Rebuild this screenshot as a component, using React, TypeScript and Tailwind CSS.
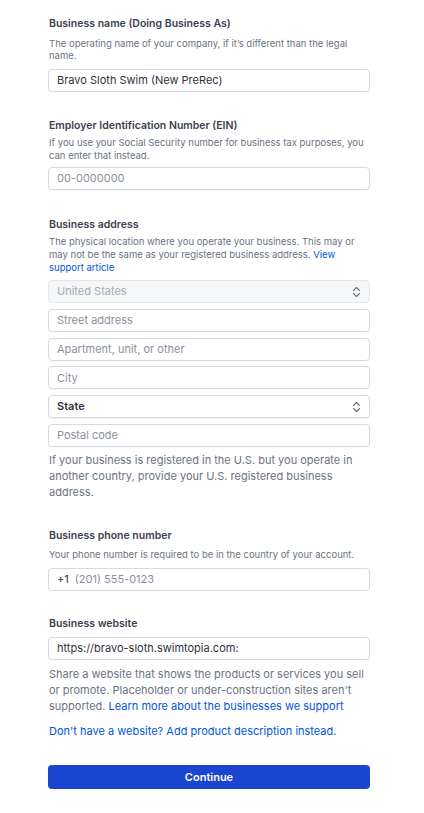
import React from "react";

const font = { fontFamily: "Inter, 'Noto Sans', sans-serif" };

function Chevrons() {
  return (
    <svg width="9" height="12" viewBox="0 0 9 12" fill="none" stroke="#6a7383" strokeWidth="1.1" strokeLinecap="round" strokeLinejoin="round">
      <path d="M1.5 4.5 L4.5 1.5 L7.5 4.5" />
      <path d="M1.5 7.5 L4.5 10.5 L7.5 7.5" />
    </svg>
  );
}

function Input({ placeholder, value }: { placeholder?: string; value?: string }) {
  return (
    <div className="h-[23px] w-full rounded-[4px] border border-[#d5dae1] bg-white px-[8px] flex items-center text-[11px] shadow-[0_1px_1px_rgba(0,0,0,0.03)]">
      {value ? (
        <span className="text-[#30313d]">{value}</span>
      ) : (
        <span className="text-[#8a919d]">{placeholder}</span>
      )}
    </div>
  );
}

export default function App() {
  return (
    <div className="min-h-[813px] w-[424px] bg-white" style={font}>
      <div className="w-[322px] ml-[48px] pt-[17px] flex flex-col">
        {/* Business name */}
        <div className="pl-[1px] text-[10.5px] leading-[14px] font-semibold text-[#3c4150]">Business name (Doing Business As)</div>
        <div className="pl-[1px] mt-[7px] text-[9.5px] leading-[12px] text-[#6a7383]">
          The operating name of your company, if it’s different than the legal name.
        </div>
        <div className="mt-[7px]">
          <Input value="Bravo Sloth Swim (New PreRec)" />
        </div>

        {/* EIN */}
        <div className="pl-[1px] mt-[27px] text-[10.5px] leading-[14px] font-semibold text-[#3c4150]">Employer Identification Number (EIN)</div>
        <div className="pl-[1px] mt-[3px] text-[9.5px] leading-[13px] text-[#6a7383]">
          If you use your Social Security number for business tax purposes, you can enter that instead.
        </div>
        <div className="mt-[5px]">
          <Input placeholder="00-0000000" />
        </div>

        {/* Address */}
        <div className="pl-[1px] mt-[28px] text-[10.5px] leading-[14px] font-semibold text-[#3c4150]">Business address</div>
        <div className="pl-[1px] mt-[3px] text-[9.5px] leading-[13px] text-[#6a7383]">
          The physical location where you operate your business. This may or may not be the same as your registered business address.{" "}
          <span className="text-[#0055de]">View support article</span>
        </div>
        <div className="mt-[6px] flex flex-col gap-[5.8px]">
          <div className="h-[23px] w-full rounded-[4px] border border-[#e3e6ea] bg-[#f5f6f8] px-[8px] flex items-center justify-between text-[11px] text-[#a3acb9]">
            <span>United States</span>
            <Chevrons />
          </div>
          <Input placeholder="Street address" />
          <Input placeholder="Apartment, unit, or other" />
          <Input placeholder="City" />
          <div className="h-[23px] w-full rounded-[4px] border border-[#d5dae1] bg-white px-[8px] flex items-center justify-between text-[11px] font-semibold text-[#30313d] shadow-[0_1px_1px_rgba(0,0,0,0.06)]">
            <span>State</span>
            <Chevrons />
          </div>
          <Input placeholder="Postal code" />
        </div>
        <div className="pl-[1px] mt-[5px] text-[11px] leading-[16px] text-[#6a7383]">
          If your business is registered in the U.S. but you operate in another country, provide your U.S. registered business address.
        </div>

        {/* Phone */}
        <div className="pl-[1px] mt-[29px] text-[10.5px] leading-[14px] font-semibold text-[#3c4150]">Business phone number</div>
        <div className="pl-[1px] mt-[6px] text-[9.5px] leading-[12px] text-[#6a7383]">
          Your phone number is required to be in the country of your account.
        </div>
        <div className="mt-[7px]">
          <div className="h-[23px] w-full rounded-[4px] border border-[#d5dae1] bg-white px-[8px] flex items-center text-[11px]">
            <span className="text-[#30313d]">+1</span>
            <span className="ml-[6px] text-[#8a919d]">(201) 555-0123</span>
          </div>
        </div>

        {/* Website */}
        <div className="pl-[1px] mt-[26px] text-[10.5px] leading-[14px] font-semibold text-[#3c4150]">Business website</div>
        <div className="mt-[6px]">
          <Input value="https://bravo-sloth.swimtopia.com:" />
        </div>
        <div className="pl-[1px] mt-[6px] text-[11px] leading-[16px] text-[#6a7383]">
          Share a website that shows the products or services you sell or promote. Placeholder or under-construction sites aren't supported.{" "}
          <span className="text-[#0055de]">Learn more about the businesses we support</span>
        </div>
        <div className="pl-[1px] mt-[9px] text-[11px] leading-[16px] text-[#0055de]">
          Don't have a website? Add product description instead.
        </div>

        <button className="mt-[26px] h-6 w-full rounded-[4px] bg-[#1a45d0] text-white text-[11px] font-semibold flex items-center justify-center">
          Continue
        </button>
      </div>
    </div>
  );
}
